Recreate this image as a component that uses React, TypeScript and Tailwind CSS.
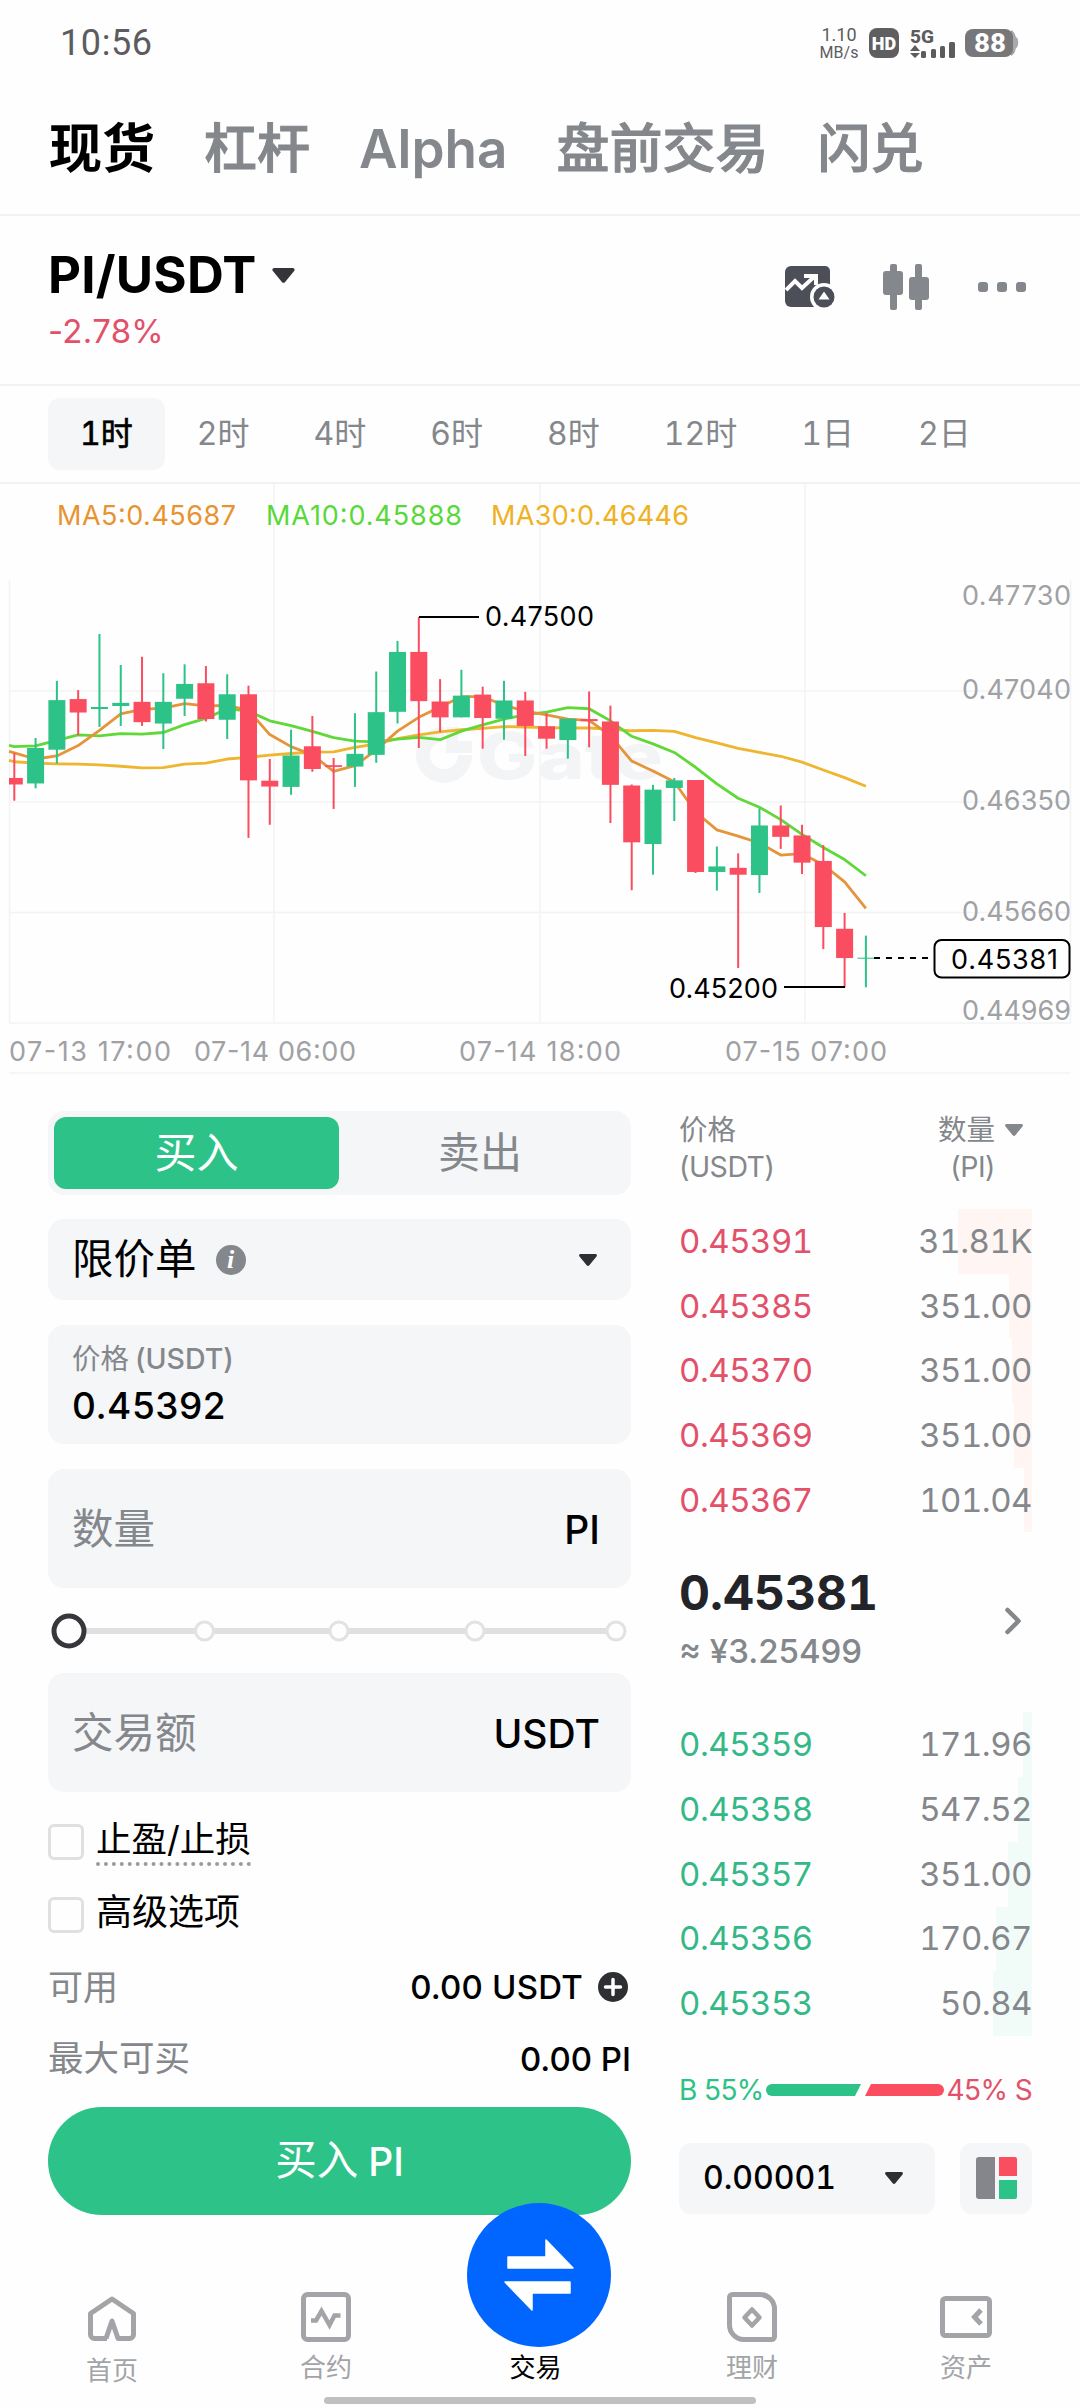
import { ChevronRight } from 'lucide-react'

type Candle = [up: 0 | 1, high: number, top: number, bottom: number, low: number]

const markets = ['杠杆', 'Alpha', '盘前交易', '闪兑']
const timeframes = ['1时', '2时', '4时', '6时', '8时', '12时', '1日', '2日']

const asks = [
  { price: '0.45391', amount: '31.81K', depth: 74 },
  { price: '0.45385', amount: '351.00', depth: 23 },
  { price: '0.45370', amount: '351.00', depth: 20 },
  { price: '0.45369', amount: '351.00', depth: 18 },
  { price: '0.45367', amount: '101.04', depth: 8 },
]

const bids = [
  { price: '0.45359', amount: '171.96', depth: 9 },
  { price: '0.45358', amount: '547.52', depth: 14 },
  { price: '0.45357', amount: '351.00', depth: 24 },
  { price: '0.45356', amount: '170.67', depth: 36 },
  { price: '0.45353', amount: '50.84', depth: 39 },
]

const candles: Candle[] = [
  [0, 618, 691, 710, 757],
  [1, 575, 604, 707, 721],
  [1, 409, 465, 609, 649],
  [0, 436, 462, 501, 567],
  [1, 273, 485, 491, 543],
  [1, 363, 473, 482, 540],
  [0, 339, 470, 529, 540],
  [1, 387, 470, 533, 607],
  [1, 361, 418, 461, 511],
  [0, 366, 416, 520, 527],
  [1, 390, 448, 522, 578],
  [0, 423, 448, 698, 865],
  [0, 636, 699, 716, 827],
  [1, 551, 626, 717, 740],
  [0, 511, 599, 665, 673],
  [0, 633, 654, 659, 781],
  [1, 503, 621, 658, 717],
  [1, 382, 500, 624, 647],
  [1, 293, 325, 499, 533],
  [0, 224, 325, 468, 604],
  [0, 404, 469, 515, 558],
  [1, 377, 452, 515, 515],
  [0, 426, 449, 517, 606],
  [1, 409, 466, 519, 580],
  [0, 441, 466, 540, 627],
  [0, 503, 541, 577, 606],
  [1, 518, 519, 581, 635],
  [0, 440, 520, 526, 602],
  [0, 481, 527, 711, 822],
  [0, 710, 713, 878, 1017],
  [1, 711, 725, 883, 972],
  [1, 691, 698, 720, 816],
  [0, 697, 697, 964, 967],
  [1, 890, 948, 964, 1018],
  [0, 910, 952, 972, 1243],
  [1, 780, 829, 973, 1025],
  [0, 771, 829, 862, 897],
  [0, 827, 858, 937, 970],
  [0, 886, 932, 1124, 1188],
  [0, 1083, 1129, 1214, 1299],
  [1, 1149, 1213, 1216, 1299],
]

const ma5 = [
  618, 636, 627, 597, 553, 505, 492, 488, 475, 482, 480, 495, 565, 600, 624, 672, 655, 610, 555, 515, 485, 455, 455, 480,
  497, 508, 520, 524, 568, 642, 671, 702, 790, 842, 860, 880, 915, 911, 943, 993, 1070,
]
const ma10 = [
  600, 598, 582, 566, 569, 562, 564, 559, 536, 518, 490, 497, 525, 539, 556, 574, 584, 586, 578, 573, 580, 555, 537, 520,
  508, 500, 487, 490, 525, 570, 592, 617, 660, 708, 750, 776, 812, 855, 893, 928, 975,
]
const ma30 = [
  644, 648, 650, 651, 653, 657, 662, 661, 651, 648, 636, 631, 625, 620, 616, 615, 602, 592, 577, 566, 557, 551, 547, 542,
  543, 545, 546, 546, 549, 554, 553, 556, 574, 589, 605, 617, 628, 645, 668, 690, 715,
]

const UP = '#2dc287'
const DOWN = '#fa4d60'

const cx = (i: number) => 14.3 + i * 21.29
const cy = (v: number) => 56 + v / 2.904
const linePoints = (values: number[]) =>
  `9,${cy(values[0] - 4)} ` + values.map((v, i) => `${cx(i)},${cy(v)}`).join(' ')

function Caret({ className }: { className?: string }) {
  return (
    <svg viewBox="0 0 18 12" className={className} fill="currentColor">
      <path d="M1.6 0h14.8c1.3 0 2 1.400 1.100 2.400l-7.200 8.800c-.7.9-1.900.9-2.600 0L.5 2.400C-.4 1.400.3 0 1.600 0z" />
    </svg>
  )
}

function StatusBar() {
  return (
    <div className="flex h-20 items-center pt-1.5 pr-[61px] pl-[60px] text-[#5c5c5e]">
      <span className="font-[Roboto] text-[36px] leading-none tracking-[0.6px]">10:56</span>
      <div className="ml-auto flex items-center">
        <div className="w-[40px] text-center font-[Roboto]">
          <div className="text-[18px] leading-[19px]">1.10</div>
          <div className="text-[16px] leading-[17px]">MB/s</div>
        </div>
        <div className="ml-[10px] flex h-[30px] w-[30px] items-center justify-center rounded-lg bg-[#5f5f61] font-[Roboto] text-[18px] font-black text-white">
          HD
        </div>
        <svg viewBox="0 0 46 30" className="ml-[11px] h-[30px] w-[46px] overflow-visible" fill="#5c5c5e">
          <text x="0" y="14.500" fontFamily="Roboto" fontSize="19" fontWeight="800" textLength="24" lengthAdjust="spacingAndGlyphs">
            5G
          </text>
          <path d="M0 23l5-6 5 6zM0 25l5 5 5-5z" />
          <rect x="11" y="23" width="5" height="7" rx="1.500" />
          <rect x="21" y="21" width="5" height="9" rx="1.500" />
          <rect x="30" y="18" width="5" height="12" rx="1.500" />
          <rect x="39" y="14" width="6" height="16" rx="1.500" />
        </svg>
        <svg viewBox="0 0 54 28" className="ml-[9px] h-[28px] w-[54px]">
          <path d="M46 1c4 2 4 5 5 7 3 1 3 10 0 11-1 3-1 6-5 8z" fill="#a9a9ab" />
          <rect width="48" height="28" rx="8" fill="#77777a" />
          <text x="9" y="22.500" fontFamily="Roboto" fontSize="25" fontWeight="800" fill="#fff" textLength="32" lengthAdjust="spacingAndGlyphs">
            88
          </text>
        </svg>
      </div>
    </div>
  )
}

function MarketTabs() {
  return (
    <div className="flex h-[136px] items-center gap-[49px] border-b-2 border-[#f1f2f3] pt-[5px] pl-[49px] text-[53px] leading-none font-medium text-[#84878b]">
      <span className="font-bold text-black">现货</span>
      {markets.map((m) => (
        <span key={m} className={m === 'Alpha' ? 'font-semibold' : '[-webkit-text-stroke:1px_#84878b]'}>
          {m}
        </span>
      ))}
    </div>
  )
}

function PairHeader() {
  return (
    <div className="flex h-[170px] items-start border-b-2 border-[#f1f2f3] pr-[54px] pl-12">
      <div className="pt-[34px]">
        <div className="flex items-center">
          <span className="text-[51px] leading-[50px] font-bold tracking-[0.2px] text-black">PI/USDT</span>
          <Caret className="ml-[15px] h-[15px] w-[23px] text-[#333538]" />
        </div>
        <div className="mt-[14px] text-[33px] leading-[34px] tracking-[0.3px] text-[#e2506a]">-2.78%</div>
      </div>
      <div className="ml-auto flex items-center pt-[48px]">
        <svg viewBox="0 0 50 46" className="h-[46px] w-[50px]">
          <path d="M6 2h34a5 5 0 015 5v36H6a6 6 0 01-6-6V8a6 6 0 016-6z" fill="#4c4f57" />
          <path d="M1 26l9-9 7 7 13-12M19 12h12v9" fill="none" stroke="#fefefe" strokeWidth="4" />
          <circle cx="39" cy="33" r="14" fill="#fefefe" />
          <circle cx="39" cy="33" r="10.500" fill="#4c4f57" />
          <path d="M39 27.500l5.500 8h-11z" fill="#fefefe" />
        </svg>
        <svg viewBox="0 0 46 46" className="ml-[48px] h-[46px] w-[46px]" fill="#84878b">
          <rect x="7" y="0" width="7" height="46" rx="2" />
          <rect x="0" y="7" width="20" height="24" rx="3" />
          <rect x="32" y="0" width="7" height="46" rx="2" />
          <rect x="26" y="13" width="20" height="23" rx="3" />
        </svg>
        <div className="ml-[49px] flex gap-[9px]">
          <i className="h-[10px] w-[10px] rounded-[3px] bg-[#84878b]" />
          <i className="h-[10px] w-[10px] rounded-[3px] bg-[#84878b]" />
          <i className="h-[10px] w-[10px] rounded-[3px] bg-[#84878b]" />
        </div>
      </div>
    </div>
  )
}

function Timeframes() {
  return (
    <div className="flex h-[98px] items-center border-b-2 border-[#f1f2f3] pl-12 text-[32px] leading-none tabular-nums text-[#84878b]">
      {timeframes.map((t, i) => (
        <span
          key={t}
          className={
            i === 0
              ? 'flex h-[72px] items-center rounded-xl bg-[#f4f6f8] px-8 text-black [-webkit-text-stroke:0.6px_black]'
              : 'flex h-[72px] items-center px-8'
          }
        >
          {t}
        </span>
      ))}
    </div>
  )
}

function Chart() {
  return (
    <svg viewBox="0 0 1080 590" className="block h-[590px] w-[1080px]" fontFamily="Inter, sans-serif" fontSize="27">
      <g stroke="#f2f3f3" strokeWidth="1.500" fill="none">
        <path d="M9.500 96v443M274 0v539M540 0v539M805 0v539M1070.500 96v443" />
        <path d="M9 207h1061M9 318h1061M9 428.500h1061M9 539h1061M9 589h1061" />
      </g>

      <g fill="#f2f4f6">
        <path d="M444 243a28 28 0 1028 28h-14a14 14 0 11-14-14zM446 243h12v14h14v12h-26z" />
        <text x="477" y="295" fontSize="64" fontWeight="800" textLength="186" lengthAdjust="spacingAndGlyphs">
          Gate
        </text>
      </g>

      <g fontSize="27">
        <text x="57" y="41" fill="#e8932f" textLength="179">MA5:0.45687</text>
        <text x="266" y="41" fill="#58d93a" textLength="196">MA10:0.45888</text>
        <text x="491" y="41" fill="#efb11f" textLength="198">MA30:0.46446</text>
      </g>

      <g fill="none" strokeWidth="2.800" strokeLinejoin="round">
        <polyline points={linePoints(ma30)} stroke="#efb52e" />
        <polyline points={linePoints(ma10)} stroke="#60d838" />
        <polyline points={linePoints(ma5)} stroke="#e6943a" />
      </g>

      {candles.map(([up, high, top, bottom, low], i) => {
        const left = Math.max(cx(i) - 8.5, 9)
        return (
          <g key={i} fill={up ? UP : DOWN}>
            <rect x={cx(i) - 1} y={cy(high)} width="2" height={(low - high) / 2.904} />
            <rect x={left} y={cy(top)} width={cx(i) + 8.5 - left} height={(bottom - top) / 2.904} />
          </g>
        )
      })}

      <g stroke="#000" strokeWidth="2" fill="none">
        <path d="M419 133h60M784 503h61" />
        <path d="M874 474h55" strokeDasharray="6 6" />
        <rect x="934.500" y="456" width="135" height="37.500" rx="7" fill="#fefefe" />
      </g>
      <g fill="#000">
        <text x="485" y="142" textLength="109">0.47500</text>
        <text x="669" y="514" textLength="109">0.45200</text>
        <text x="951" y="485" textLength="107">0.45381</text>
      </g>

      <g fill="#9fa1a4">
        <text x="962" y="121" textLength="109">0.47730</text>
        <text x="962" y="215" textLength="109">0.47040</text>
        <text x="962" y="326" textLength="109">0.46350</text>
        <text x="962" y="437" textLength="109">0.45660</text>
        <text x="962" y="536" textLength="109">0.44969</text>
        <text x="9" y="577" textLength="162">07-13 17:00</text>
        <text x="194" y="577" textLength="162">07-14 06:00</text>
        <text x="459" y="577" textLength="162">07-14 18:00</text>
        <text x="725" y="577" textLength="162">07-15 07:00</text>
      </g>
    </svg>
  )
}

function Slider() {
  return (
    <svg viewBox="0 0 583 36" className="mt-[25px] block h-[36px] w-[583px]">
      <rect x="20" y="15" width="548" height="6" fill="#dfe0e1" />
      {[156.5, 291, 427, 568].map((x) => (
        <circle key={x} cx={x} cy="18" r="9" fill="#fefefe" stroke="#e1e2e3" strokeWidth="3" />
      ))}
      <circle cx="21" cy="18" r="15" fill="#fefefe" stroke="#35373a" strokeWidth="5" />
    </svg>
  )
}

function Checkbox() {
  return <span className="mr-3 h-9 w-9 rounded-md border-3 border-[#dfe0e2]" />
}

function OrderForm() {
  return (
    <div className="w-[583px]">
      <div className="flex h-[84px] rounded-2xl bg-[#f4f6f8] p-[6px] text-[42px] leading-none">
        <div className="flex w-[285px] items-center justify-center rounded-xl bg-[#2dc287] text-white">买入</div>
        <div className="flex flex-1 items-center justify-center pr-1 text-[#84878b]">卖出</div>
      </div>

      <div className="mt-6 flex h-[81px] items-center rounded-2xl bg-[#f4f6f8] pr-[34px] pl-[24px]">
        <span className="text-[41.500px] leading-none text-black">限价单</span>
        <span className="ml-[19px] flex h-[30px] w-[30px] items-center justify-center rounded-full bg-[#84878b] font-['Liberation_Serif'] text-[26px] leading-none font-bold text-white italic">
          i
        </span>
        <Caret className="ml-auto h-[12px] w-[18px] text-[#2d2f32]" />
      </div>

      <div className="mt-[25px] h-[119px] rounded-2xl bg-[#f4f6f8] pt-[18px] pl-[24px]">
        <div className="text-[28.500px] leading-[32px] text-[#84878b]">
          价格<span className="ml-1.5 font-medium">(USDT)</span>
        </div>
        <div className="mt-[11px] text-[37px] leading-[40px] font-medium tracking-[0.5px] text-black">0.45392</div>
      </div>

      <div className="mt-[25px] flex h-[119px] items-center justify-between rounded-2xl bg-[#f4f6f8] pt-[2px] pr-[31px] pl-[24px] leading-none">
        <span className="text-[41.500px] text-[#84878b]">数量</span>
        <span className="text-[39px] font-medium text-black">PI</span>
      </div>

      <Slider />

      <div className="mt-[24px] flex h-[119px] items-center justify-between rounded-2xl bg-[#f4f6f8] pt-[2px] pr-[31px] pl-[24px] leading-none">
        <span className="text-[41.500px] text-[#84878b]">交易额</span>
        <span className="text-[39px] font-medium text-black">USDT</span>
      </div>

      <div className="mt-[26px] flex h-[50px] items-start pt-[6px]">
        <Checkbox />
        <span className="h-[42px] border-b-4 border-dotted border-[#9a9c9f] text-[35.500px] leading-[31px] text-black">
          止盈/止损
        </span>
      </div>
      <div className="mt-[23px] flex h-[50px] items-start pt-[6px]">
        <Checkbox />
        <span className="text-[36px] leading-[31px] text-black">高级选项</span>
      </div>

      <div className="mt-[28px] flex h-[36px] items-center leading-none">
        <span className="text-[35px] text-[#84878b]">可用</span>
        <span className="ml-auto text-[33px] font-medium tracking-[0.2px] text-black">0.00 USDT</span>
        <svg viewBox="0 0 30 30" className="mr-[3px] ml-[15px] h-[30px] w-[30px]">
          <circle cx="15" cy="15" r="15" fill="#2d2f32" />
          <path d="M15 7.500v15M7.500 15h15" stroke="#fff" strokeWidth="3.500" strokeLinecap="round" />
        </svg>
      </div>
      <div className="mt-[36px] flex h-[36px] items-center justify-between leading-none">
        <span className="text-[35.500px] text-[#84878b]">最大可买</span>
        <span className="text-[33px] font-medium text-black">0.00 PI</span>
      </div>

      <div className="mt-[30px] flex h-[108px] items-center justify-center rounded-full bg-[#2dc287] text-[41.500px] leading-none text-white">
        买入<span className="ml-[10px] text-[39px] font-medium">PI</span>
      </div>
    </div>
  )
}

function BookRow({ price, amount, depth, side }: { price: string; amount: string; depth: number; side: 'ask' | 'bid' }) {
  return (
    <div className="relative flex h-[64.700px] items-center justify-between text-[33px] leading-none tracking-[-0.500px] tabular-nums">
      <div
        className={side === 'ask' ? 'absolute inset-y-0 right-0 bg-[#fff5f3]' : 'absolute inset-y-0 right-0 bg-[#f1fbf8]'}
        style={{ width: depth }}
      />
      <span className={side === 'ask' ? 'relative text-[#e2506a]' : 'relative text-[#35b888]'}>{price}</span>
      <span className="relative text-[#84878b]">{amount}</span>
    </div>
  )
}

function OrderBook() {
  return (
    <div className="ml-[48px] w-[353px]">
      <div className="flex justify-between text-[28.500px] leading-[37px] text-[#84878b]">
        <div>
          价格
          <br />
          <span className="tracking-[-0.500px]">(USDT)</span>
        </div>
        <div className="pr-[9px]">
          <div className="flex items-center">
            数量
            <Caret className="ml-[10px] h-[12px] w-[18px]" />
          </div>
          <div className="pr-[28px] text-right tracking-[-0.500px]">(PI)</div>
        </div>
      </div>

      <div className="mt-[24px]">
        {asks.map((row) => (
          <BookRow key={row.price} {...row} side="ask" />
        ))}
      </div>

      <div className="mt-[34px] flex h-[104px] items-center">
        <div>
          <div className="text-[48px] leading-[48px] font-bold tabular-nums text-[#222429]">0.45381</div>
          <div className="mt-[17px] text-[33px] leading-[34px] font-medium text-[#84878b]">≈ ¥3.25499</div>
        </div>
        <ChevronRight className="mt-[5px] mr-[-3px] ml-auto h-[44px] w-[44px] text-[#84878b]" strokeWidth={2.5} />
      </div>

      <div className="mt-[42px]">
        {bids.map((row) => (
          <BookRow key={row.price} {...row} side="bid" />
        ))}
      </div>

      <div className="mt-[37px] flex h-[34px] items-center justify-between text-[28px] leading-none whitespace-nowrap">
        <span className="w-[87px] tracking-[-0.600px] text-[#2dc287]">B 55%</span>
        <svg viewBox="0 0 178 12" className="h-[12px] w-[178px] shrink-0">
          <path d="M6 0h89l-6 12H6A6 6 0 016 0z" fill={UP} />
          <path d="M105 0h67a6 6 0 010 12H99z" fill={DOWN} />
        </svg>
        <span className="w-[88px] text-right tracking-[-0.600px] text-[#e2506a]">45% S</span>
      </div>

      <div className="mt-[36px] flex justify-between">
        <div className="flex h-[71px] w-[256px] items-center justify-between rounded-xl bg-[#f4f6f8] pr-[32px] pl-[24px] text-[32px] font-medium tabular-nums text-black">
          0.00001
          <Caret className="h-[12px] w-[18px] text-[#2d2f32]" />
        </div>
        <div className="flex h-[71px] w-[72px] items-center justify-center gap-[4px] rounded-xl bg-[#f4f6f8]">
          <i className="h-[42px] w-[19px] rounded-l-[3px] bg-[#84868c]" />
          <div className="flex flex-col gap-[4px]">
            <i className="h-[19px] w-[18px] rounded-tr-[2px] bg-[#fa4d60]" />
            <i className="h-[19px] w-[18px] rounded-br-[2px] bg-[#2dc287]" />
          </div>
        </div>
      </div>
    </div>
  )
}

function NavItem({ label, children }: { label: string; children: React.ReactNode }) {
  return (
    <div className="flex w-[214px] flex-col items-center text-[#a2a4a7]">
      <svg viewBox="0 0 52 52" className="h-[52px] w-[52px]" fill="none" stroke="currentColor" strokeWidth="5">
        {children}
      </svg>
      <span className="mt-[9px] text-[26px] leading-[32px]">{label}</span>
    </div>
  )
}

function BottomNav() {
  return (
    <div className="relative mt-[76px] flex pl-[5px]">
      <div className="pt-[3px]">
        <NavItem label="首页">
          <path d="M21 44.500H8.500a4 4 0 01-4-4V19.500L26 5l21.500 14.500v21a4 4 0 01-4 4H32L26 27l-6 17.500" strokeLinejoin="round" />
        </NavItem>
      </div>
      <NavItem label="合约">
        <rect x="3.500" y="3.500" width="45" height="45" rx="4" />
        <path d="M11 29.500h5l5.500-9.500 8 14 5-9.500h6" strokeWidth="4.500" />
      </NavItem>
      <div className="flex w-[212px] flex-col items-center pt-[61px] pr-[7px]">
        <svg viewBox="0 0 144 144" className="absolute top-[-88px] left-[467px] h-[144px] w-[144px]">
          <circle cx="72" cy="72" r="72" fill="#0166ff" />
          <g fill="#fff" stroke="#fff" strokeWidth="1.500" strokeLinejoin="round">
            <path d="M41 54h38V37l27 28H41z" />
            <path d="M103 79H38l27 28V90h38z" />
          </g>
        </svg>
        <span className="text-[26px] leading-[32px] text-black">交易</span>
      </div>
      <NavItem label="理财">
        <path d="M6.500 3.500H34a14.500 14.500 0 0114.500 14.500v27.500a3 3 0 01-3 3H18A14.500 14.500 0 013.500 34V6.500a3 3 0 013-3z" />
        <path d="M26 18.500l7.500 8-7.500 8-7.500-8z" strokeWidth="4.500" strokeLinejoin="round" />
      </NavItem>
      <NavItem label="资产">
        <rect x="2.500" y="7.500" width="47" height="37" rx="3" />
        <path d="M41 19l-6.500 7 6.500 7" />
      </NavItem>
      <div className="absolute top-[106px] left-[324px] h-[7px] w-[432px] rounded-full bg-[#c0c0c1]" />
    </div>
  )
}

export default function App() {
  return (
    <div className="h-[2408px] w-[1080px] overflow-hidden bg-[#fefefe] font-[Inter,'Noto_Sans_CJK_SC',sans-serif]">
      <StatusBar />
      <MarketTabs />
      <PairHeader />
      <Timeframes />
      <Chart />
      <div className="flex h-[1141px] pt-[37px] pl-12">
        <OrderForm />
        <OrderBook />
      </div>
      <BottomNav />
    </div>
  )
}
